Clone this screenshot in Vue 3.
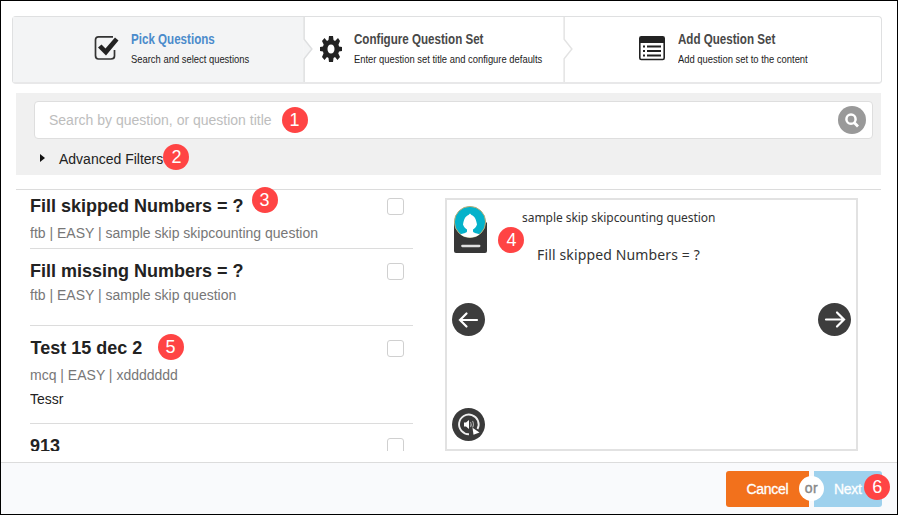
<script setup>
const questions = [
  { title: 'Fill skipped Numbers = ?', meta: 'ftb | EASY | sample skip skipcounting question', kind: 'first', badge: 3 },
  { title: 'Fill missing Numbers = ?', meta: 'ftb | EASY | sample skip question', kind: 'second' },
  { title: 'Test 15 dec 2', meta: 'mcq | EASY | xddddddd', extra: 'Tessr', kind: 'third', badge: 5 },
  { title: '913', kind: 'fourth' },
]
</script>

<template>
  <div class="window">
    <header class="steps">
      <div class="step active">
        <svg class="step-icon" width="26" height="27" viewBox="0 0 26 27">
          <path d="M19 1.800H4.500Q1.500 1.800 1.500 4.800V20.500Q1.500 24 4.500 24H17Q20.500 24 20.500 21V15" fill="none" stroke="#333" stroke-width="1.700" />
          <path d="M4 12.500L7.500 9.500L11.500 13.500L21 2.500L24.500 5.500L12 20.500Z" fill="#222" />
        </svg>
        <div class="step-text">
          <div class="step-title t1">Pick Questions</div>
          <div class="step-sub">Search and select questions</div>
        </div>
        <svg class="chevron" width="11" height="67" viewBox="0 0 11 67">
          <path d="M0 0H1V23L9 33L1 43V67H0Z" fill="#f3f4f5" />
          <path d="M1 0V23L9 33L1 43V67" fill="none" stroke="#dedfe0" stroke-width="1.500" />
        </svg>
      </div>
      <div class="step configure">
        <svg class="step-icon" width="22" height="28" viewBox="0 0 22 28">
          <path fill-rule="evenodd" fill="#222" d="M9 1H13L13.500 5L15 6L18 3L20 6L18.500 9.500L19 11.500L22 12V16L19 16.500L18.300 18.500L20 22L17.500 25L15 22L13.500 23L13 27H9L8.500 23L7 22L4.500 25L2 22L3.500 18.500L3 16.500L0 16V12L3 11.500L3.700 9.500L2 6L4.500 3L7 6L8.500 5ZM11 9.500C8.800 9.500 7.500 11.500 7.500 14S8.800 18.500 11 18.500S14.500 16.500 14.500 14S13.200 9.500 11 9.500Z" />
        </svg>
        <div class="step-text">
          <div class="step-title">Configure Question Set</div>
          <div class="step-sub">Enter question set title and configure defaults</div>
        </div>
        <svg class="chevron" width="11" height="67" viewBox="0 0 11 67">
          <path d="M0 0H1V23L9 33L1 43V67H0Z" fill="#fff" />
          <path d="M1 0V23L9 33L1 43V67" fill="none" stroke="#e3e3e3" stroke-width="1.500" />
        </svg>
      </div>
      <div class="step add">
        <svg class="step-icon" width="26" height="26" viewBox="0 0 26 26">
          <rect x=".8" y="1.800" width="24.400" height="22.700" rx="1.500" fill="#fff" stroke="#222" stroke-width="1.600" />
          <path d="M1 2H25V8H1Z" fill="#222" />
          <path d="M8 11.500H22M8 16H22M8 20.500H22" stroke="#222" stroke-width="2" />
          <path d="M4 11.500H6M4 16H6M4 20.500H6" stroke="#222" stroke-width="1.800" />
        </svg>
        <div class="step-text">
          <div class="step-title">Add Question Set</div>
          <div class="step-sub">Add question set to the content</div>
        </div>
      </div>
    </header>

    <section class="filters">
      <div class="search">
        <span class="placeholder">Search by question, or question title</span>
        <span class="badge b1">1</span>
        <svg class="search-button" width="28" height="28" viewBox="0 0 28 28">
          <circle cx="14" cy="14" r="14" fill="#999" />
          <circle cx="13" cy="13.200" r="4.600" fill="none" stroke="#fff" stroke-width="2.500" />
          <path d="M16.300 16.800L20 20.500" stroke="#fff" stroke-width="2.900" />
        </svg>
      </div>
      <div class="advanced">
        <svg class="caret" width="5" height="8" viewBox="0 0 5 8"><path d="M0 0L5 4L0 8Z" fill="#111" /></svg>
        <span class="advanced-label">Advanced Filters</span>
        <span class="badge b2">2</span>
      </div>
    </section>

    <main class="content">
      <div class="list">
        <article v-for="q in questions" :key="q.title" class="question" :class="q.kind">
          <div class="question-text">
            <div class="question-title">{{ q.title }}</div>
            <div v-if="q.meta" class="meta">{{ q.meta }}</div>
            <div v-if="q.extra" class="extra">{{ q.extra }}</div>
          </div>
          <span class="checkbox"></span>
          <span v-if="q.badge" class="badge row-badge">{{ q.badge }}</span>
        </article>
      </div>

      <div class="preview">
        <div class="preview-head">
          <svg width="34" height="49" viewBox="0 0 34 49">
            <path d="M0 17.500H33V46Q33 48 31 48H2Q0 48 0 46Z" fill="#373737" />
            <circle cx="16" cy="17" r="15.600" fill="#05b2ca" stroke="#b9ad78" stroke-width="1" />
            <path d="M14.500 10L16 8.500L17.500 10C20.500 11 22 14 23 19.500C22 22 21 23 19 24.500V26.500C20 28.500 23.500 28 25.500 29.500Q21.500 32.500 16 32.500T6.500 29.500C8.500 28 12 28.500 13 26.500V24.500C11 23 10 22 9 19.500C10 14 11.500 11 14.500 10Z" fill="#fff" />
            <path d="M8.300 41H25.300" stroke="#e0e0e0" stroke-width="2.300" stroke-linecap="round" />
          </svg>
          <div class="preview-text">
            <div class="preview-title">sample skip skipcounting question</div>
            <div class="preview-question">Fill skipped Numbers = ?</div>
          </div>
          <span class="badge b4">4</span>
        </div>
        <div class="arrows">
          <svg width="33" height="33" viewBox="0 0 33 33">
            <circle cx="16.500" cy="16.500" r="16.500" fill="#3d3d3d" />
            <path d="M25 17H8M14.500 10.500L8 17L14.500 23.500" fill="none" stroke="#fff" stroke-width="2.200" stroke-linecap="round" />
          </svg>
          <svg width="33" height="33" viewBox="0 0 33 33">
            <circle cx="16.500" cy="16.500" r="16.500" fill="#3d3d3d" />
            <path d="M8 16.500H25.500M19 9.500L26 16.500L19 23.500" fill="none" stroke="#fff" stroke-width="2.200" stroke-linecap="round" />
          </svg>
        </div>
        <svg class="replay" width="33" height="33" viewBox="0 0 33 33">
          <circle cx="16.500" cy="16.500" r="16.500" fill="#3a3a3a" />
          <path d="M17 26.200A9.800 9.800 0 1 1 25.500 21" fill="none" stroke="#eee" stroke-width="1.900" />
          <path d="M20.500 19.800L21.500 26.700L27.500 24.500Z" fill="#fff" />
          <path d="M12 14.500H14L17 12V21L14 18.500H12Z" fill="#fff" />
          <path d="M18.500 14Q20 16.500 18.500 19M20.500 13Q22.500 16.500 20.500 19.500" fill="none" stroke="#aaa" stroke-width="1.100" />
        </svg>
      </div>
    </main>

    <footer class="footer">
      <div class="buttons">
        <div class="button cancel"><span>Cancel</span></div>
        <div class="button next"><span>Next</span></div>
        <span class="or">or</span>
        <span class="badge b6">6</span>
      </div>
    </footer>
  </div>
</template>

<style>
body { background: #fff; }
</style>

<style scoped>
* { box-sizing: border-box; }
svg { display: block; flex: none; }
.window {
  width: 898px; height: 515px; border: 1px solid #000; background: #fff; overflow: hidden;
  display: flex; flex-direction: column;
  font-family: "Liberation Sans", Arial, sans-serif; color: #222; white-space: nowrap;
}
.steps {
  flex: none; margin: 15px 0 0 11px; width: 870px; height: 68px; display: flex;
  border: 1px solid #dfe0e1; border-bottom-width: 2px; border-bottom-color: #e8e8e9; border-radius: 4px;
}
.step { position: relative; display: flex; padding-top: 17px; }
.active { width: 290px; background: #f3f4f5; padding-left: 81px; }
.configure { width: 260px; padding-left: 17px; }
.add { flex: 1; padding-left: 76px; }
.step-icon { margin-top: 1px; }
.active .step-text { margin-left: 11px; }
.configure .step-text { margin-left: 12px; }
.add .step-text { margin-left: 13px; }
.chevron { position: absolute; right: -11px; top: 0; z-index: 1; height: 65px; }
.step-text { width: 0; margin-top: -4px; }
.step-title { width: max-content; font-weight: bold; font-size: 15px; line-height: 18px; transform: scaleX(.773); transform-origin: left; color: #484848; }
.step-sub { width: max-content; font-size: 10.5px; line-height: 14px; margin-top: 4px; transform: scaleX(.896); transform-origin: left; color: #222; }
.t1 { color: #4b8bcb; }
.filters { flex: none; margin: 9px 0 0 15px; width: 865px; height: 82px; background: #f0f0f0; padding: 8px 8px 0 18px; }
.search {
  position: relative; height: 38px; border: 1px solid #dedede; border-radius: 4px; background: #fff;
  display: flex; align-items: center; justify-content: space-between; padding: 0 6px 0 14px;
}
.placeholder { font-size: 14px; color: #bdbdbd; }
.advanced { position: relative; display: flex; align-items: center; height: 20px; margin-top: 10px; padding-left: 6px; }
.caret { margin-bottom: 2px; }
.advanced-label { margin-left: 14px; font-size: 14px; }
.badge {
  position: absolute; z-index: 3; width: 26px; height: 26px; border-radius: 50%; background: #ff4444; color: #fff;
  font-size: 18px; line-height: 26px; text-align: center; font-weight: normal;
}
.b1 { left: 246.5px; top: 5.400px; }
.b2 { left: 129.400px; top: -4.600px; }
.content {
  flex: none; margin: 14px 0 0 15px; width: 865px; height: 262px; border-top: 1px solid #dcdcdc;
  display: flex; justify-content: space-between; padding: 0 23px 0 14px;
}
.list { width: 383px; clip-path: inset(-5px 0 0 0); }
.question { position: relative; display: flex; justify-content: space-between; border-bottom: 1px solid #dcdcdc; }
.first { height: 59px; padding-top: 6px; }
.second { height: 77px; padding-top: 12px; }
.third { height: 98px; padding-top: 12px; }
.fourth { height: 80px; padding-top: 12px; }
.question-title { font-size: 18px; font-weight: bold; line-height: 20px; }
.third .question-title { padding-left: .5px; }
.meta { font-size: 14px; line-height: 18px; color: #777; margin-top: 8px; }
.second .meta { margin-top: 5px; }
.extra { font-size: 14px; line-height: 18px; margin-top: 6px; }
.checkbox { width: 17px; height: 17px; border: 1px solid #d0d0d0; border-radius: 3px; margin: 2px 9px 0 0; }
.row-badge { left: 221.6px; top: -2.600px; }
.third .row-badge { left: 127.5px; top: 8.400px; }
.preview { margin-top: 8px; width: 413px; height: 253px; border: 2px solid #e2e2e2; position: relative; }
.preview-head { position: relative; display: flex; height: 103px; padding: 5px 0 0 7px; }
.preview-text { font-family: "Noto Sans", sans-serif; color: #333; margin-left: 34px; }
.preview-title { font-size: 12px; line-height: 16px; margin-top: 5px; letter-spacing: -.05px; }
.preview-question { font-size: 14px; line-height: 20px; margin: 19px 0 0 15px; letter-spacing: .14px; }
.b4 { left: 51.400px; top: 27.400px; }
.arrows { display: flex; justify-content: space-between; padding: 0 5px; }
.replay { margin: 72px 0 0 5px; }
.footer { margin-top: 11px; flex: 1; border-top: 1px solid #dcdcdc; background: #f9fafc; padding: 8px 0 0 725px; }
.buttons { position: relative; display: flex; gap: 5px; width: 156px; }
.button { height: 36px; font-size: 14px; line-height: 37px; color: #fff; letter-spacing: -.3px; -webkit-text-stroke: .3px #fff; }
.cancel { width: 83px; background: #f2711c; border-radius: 3px 0 0 3px; padding-left: 20.5px; }
.next { width: 68px; background: #9ed1ed; border-radius: 0 3px 3px 0; padding-left: 20px; }
.or { position: absolute; left: 73px; top: 5px; width: 25px; height: 25px; border-radius: 50%; background: #fff; color: #888; font-size: 14px; -webkit-text-stroke: .4px #888; letter-spacing: .5px; line-height: 24px; text-align: center; }
.b6 { left: 138.300px; top: 3.400px; }
</style>
